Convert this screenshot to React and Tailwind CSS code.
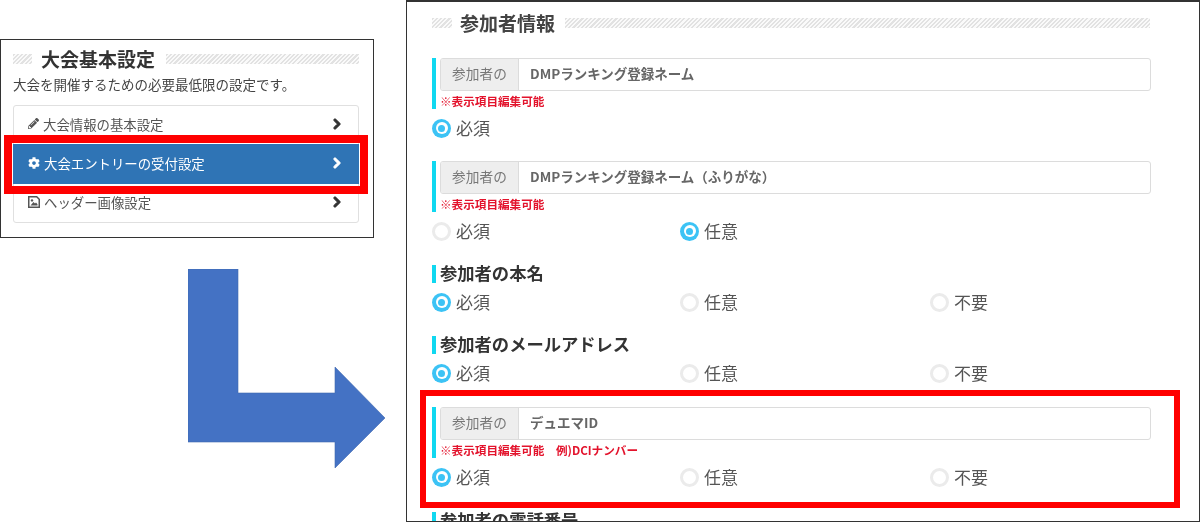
import { FaPencilAlt, FaCog, FaChevronRight } from 'react-icons/fa'

const font = "font-['Noto_Sans_CJK_JP','Noto_Sans',sans-serif]"

function Hatch({ className }) {
  return (
    <div className={`h-[10px] bg-[repeating-linear-gradient(135deg,#e2e2e2_0,#e2e2e2_1.5px,#fafafa_1.5px,#fafafa_3px)] ${className}`} />
  )
}

function Radio({ label, checked, className }) {
  return (
    <div className={`flex items-center gap-[5px] ${className}`}>
      {checked ? (
        <span className="flex h-[19px] w-[19px] items-center justify-center rounded-full bg-[#3cc3f5]">
          <span className="flex h-[12px] w-[12px] items-center justify-center rounded-full bg-white">
            <span className="h-[7px] w-[7px] rounded-full bg-[#3cc3f5]" />
          </span>
        </span>
      ) : (
        <span className="h-[19px] w-[19px] rounded-full border-[3px] border-[#ebebeb] bg-white" />
      )}
      <span className="pb-[2px] text-[17px] leading-[19px] text-[#555]">{label}</span>
    </div>
  )
}

function RadioRow({ options, value, className }) {
  return (
    <div className={`flex h-[20px] items-center ${className}`}>
      {options.map((label, i) => (
        <Radio key={label} label={label} checked={value === i} className={i === 2 ? '' : i === 0 ? 'w-[248px]' : 'w-[250px]'} />
      ))}
    </div>
  )
}

function InputField({ text, note }) {
  return (
    <div className="flex h-[51px] gap-[4px]">
      <div className="w-[4px] bg-[#10d8f0]" />
      <div className="w-[711px]">
        <div className="flex h-[33px] overflow-hidden rounded-[3px] border border-[#dcdcdc]">
          <div className="flex w-[78px] items-center justify-center border-r border-[#dcdcdc] bg-[#eeeeee] pb-[2px] text-[13.7px] text-[#777]">参加者の</div>
          <div className="flex flex-1 items-center pb-[2px] pl-[11px] text-[13.5px] font-bold text-[#666]">{text}</div>
        </div>
        <p className="mt-[2px] text-[11.6px] leading-[16px] font-bold text-[#e3132c]">{note}</p>
      </div>
    </div>
  )
}

function ItemTitle({ text }) {
  return (
    <div className="flex h-[18px] items-center gap-[4px]">
      <div className="h-[18px] w-[4px] bg-[#10d8f0]" />
      <h3 className="pb-[2px] text-[17.3px] leading-[18px] font-bold text-[#333]">{text}</h3>
    </div>
  )
}

function MenuRow({ icon, text, active, className }) {
  return (
    <div className={`flex items-center justify-between pb-[2px] text-[13.4px] ${active ? '-mx-[1px] bg-[#2f74b5] pr-[16px] pl-[15px] text-white' : 'pr-[15px] pl-[14px] text-[#555]'} ${className}`}>
      <span className="flex items-center gap-[4px]">
        {icon}
        {text}
      </span>
      <FaChevronRight className={`h-[12px] w-[12px] stroke-[50] ${active ? 'text-white' : 'text-[#333]'}`} />
    </div>
  )
}

// framed picture glyph, nothing in the icon packs is this close
function PictureIcon() {
  return (
    <svg className="h-[12px] w-[12px] text-[#555]" viewBox="0 0 12 12" fill="currentColor">
      <path fillRule="evenodd" d="M0 0H9L12 3V12H0ZM1.5 1.5V10.5H10.5V3.6L8.4 1.5Z" />
      <circle cx="4" cy="4.4" r="1.2" />
      <path d="M2.5 9.5 5.5 6 7 7.6 8 6.5 9.5 8.2V9.5Z" />
    </svg>
  )
}

const REQUIRED = ['必須']
const TWO = ['必須', '任意']
const THREE = ['必須', '任意', '不要']

export default function App() {
  return (
    <div className={`relative flex h-[522px] w-[1200px] overflow-hidden bg-white ${font}`}>
      {/* left screenshot */}
      <div className="mt-[39px] h-[199px] w-[374px] border border-[#333] bg-white px-[12px] pt-[8px] blur-[0.4px]">
        <div className="flex h-[22px] items-center">
          <Hatch className="w-[19px]" />
          <h2 className="ml-[9px] pb-[1px] text-[19px] leading-[22px] font-bold text-[#333]">大会基本設定</h2>
          <Hatch className="ml-[11px] w-[193px]" />
        </div>
        <p className="mt-[4px] text-[13.5px] leading-[20px] text-[#444]">大会を開催するための必要最低限の設定です。</p>
        <div className="mt-[11px] w-[346px] rounded-[3px] border border-[#e0e0e0]">
          <MenuRow icon={<FaPencilAlt className="h-[11px] w-[11px] text-[#555]" />} text="大会情報の基本設定" className="h-[38px]" />
          <MenuRow active icon={<FaCog className="h-[12px] w-[12px]" />} text="大会エントリーの受付設定" className="h-[40px]" />
          <MenuRow icon={<PictureIcon />} text="ヘッダー画像設定" className="h-[38px]" />
        </div>
      </div>

      {/* right screenshot */}
      <div className="ml-[32px] h-[522px] w-[794px] overflow-hidden border border-t-2 border-[#333] bg-white pt-[10px] pl-[25px] blur-[0.4px]">
        <div className="flex h-[22px] items-center">
          <Hatch className="w-[20px]" />
          <h2 className="ml-[8px] pb-[1px] text-[19px] leading-[22px] font-bold text-[#444]">参加者情報</h2>
          <Hatch className="ml-[10px] w-[585px]" />
        </div>
        <div className="mt-[24px]">
          <InputField text="DMPランキング登録ネーム" note="※表示項目編集可能" />
          <RadioRow options={REQUIRED} className="mt-[9px]" value={0} />
        </div>
        <div className="mt-[23px]">
          <InputField text="DMPランキング登録ネーム（ふりがな）" note="※表示項目編集可能" />
          <RadioRow options={TWO} className="mt-[9px]" value={1} />
        </div>
        <div className="mt-[24px]">
          <ItemTitle text="参加者の本名" />
          <RadioRow options={THREE} className="mt-[9px]" value={0} />
        </div>
        <div className="mt-[24px]">
          <ItemTitle text="参加者のメールアドレス" />
          <RadioRow options={THREE} className="mt-[9px]" value={0} />
        </div>
        <div className="mt-[24px]">
          <InputField text="デュエマID" note="※表示項目編集可能　例)DCIナンバー" />
          <RadioRow options={THREE} className="mt-[9px]" value={0} />
        </div>
        <div className="mt-[25px]">
          <ItemTitle text="参加者の電話番号" />
        </div>
      </div>

      {/* callouts */}
      <div className="absolute top-[135px] left-[4px] h-[59px] w-[364px] border-[8px] border-[#ff0000]" />
      <div className="absolute top-[390px] left-[420px] h-[118px] w-[760px] border-[6px] border-[#ff0000]" />
      <svg className="absolute top-[269px] left-[188px]" width="197" height="199" viewBox="188 269 197 199">
        <path d="M188 269H238V393H335V367L385 418L335 468V442H188Z" fill="#4472c4" stroke="#3f68ae" strokeWidth="0.6" />
      </svg>
    </div>
  )
}
